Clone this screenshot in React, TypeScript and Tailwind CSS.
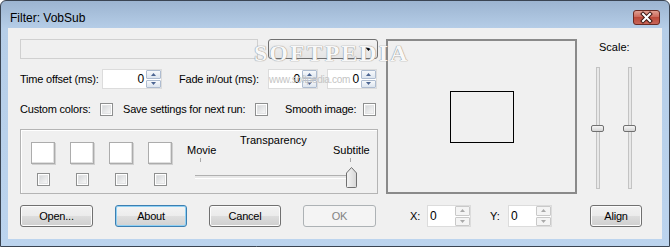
import React from "react"

const btnBase =
  "h-[22px] rounded-[3px] border flex items-center justify-center text-[11px] tracking-[-0.2px]"

function WinButton({ label, w, kind = "normal" }: { label: string; w: string; kind?: "normal" | "focused" | "disabled" }) {
  if (kind === "disabled") {
    return (
      <div className={`${btnBase} ${w} border-[#adb2b5] bg-[#f4f4f4] text-[#838383]`}>{label}</div>
    )
  }
  if (kind === "focused") {
    return (
      <div
        className={`${btnBase} ${w} border-[#3c7fb1] bg-[linear-gradient(#f4f4f4_0%,#ececec_50%,#dfdfdf_50%,#d2d2d2_100%)] shadow-[inset_0_0_0_1px_#8fd0f4] text-black`}
      >
        {label}
      </div>
    )
  }
  return (
    <div
      className={`${btnBase} ${w} border-[#707070] bg-[linear-gradient(#f2f2f2_0%,#ebebeb_50%,#dddddd_50%,#cfcfcf_100%)] shadow-[inset_0_0_0_1px_#fcfcfc] text-black`}
    >
      {label}
    </div>
  )
}

function CheckBox() {
  return (
    <div className="w-[13px] h-[13px] shrink-0 border border-[#8e8f8f] bg-white p-px">
      <div className="w-full h-full border border-[#e2e3e4] bg-[linear-gradient(135deg,#d6d8da,#f6f6f6)]" />
    </div>
  )
}

function SpinArrows({ disabled }: { disabled?: boolean }) {
  const arrow = disabled ? "#a9a9a9" : "#4c6592"
  const box = disabled
    ? "border-[#c9c9c9] bg-[#f4f4f4]"
    : "border-[#aebcd0] bg-[linear-gradient(#f7f9fb,#dde5ef)]"
  return (
    <div className="w-[15px] h-full flex flex-col gap-px shrink-0">
      <div className={`flex-1 border rounded-[1px] flex items-center justify-center ${box}`}>
        <svg width="5" height="3" viewBox="0 0 5 3">
          <path d="M0 3 L2.5 0 L5 3 Z" fill={arrow} />
        </svg>
      </div>
      <div className={`flex-1 border rounded-[1px] flex items-center justify-center ${box}`}>
        <svg width="5" height="3" viewBox="0 0 5 3">
          <path d="M0 0 L2.5 3 L5 0 Z" fill={arrow} />
        </svg>
      </div>
    </div>
  )
}

function SpinEdit({ w, right = true, disabled }: { w: string; right?: boolean; disabled?: boolean }) {
  return (
    <div className={`${w} h-[20px] shrink-0 border border-[#dcdcdc] bg-white flex items-stretch`}>
      <div
        className={`flex-1 flex items-center text-[12px] text-black ${right ? "justify-end pr-[2px]" : "justify-start pl-[2px]"}`}
      >
        0
      </div>
      <SpinArrows disabled={disabled} />
    </div>
  )
}

function VSlider() {
  return (
    <div className="relative w-[13px] h-[122px] flex justify-center">
      <div className="w-[4px] h-full border border-[#c3c3c3] bg-[#e8e8e8]" />
      <div className="absolute top-[58px] left-0 w-[13px] h-[7px] rounded-[2px] border border-[#707070] bg-[linear-gradient(#f6f6f6,#d4d4d4)]" />
    </div>
  )
}

export default function App() {
  return (
    <div className="w-[670px] h-[247px] bg-white font-['Liberation_Sans',Arial,sans-serif] text-[11px] text-black leading-[13px]">
      <div className="relative w-full h-full rounded-t-[6px] border border-[#3a4452] bg-[linear-gradient(#9cb4d0_0px,#b6cee8_28px,#bcd4ee_100%)] px-[7px] flex flex-col">
        {/* Title bar */}
        <div className="h-[27px] flex items-start justify-between pl-[2px] pr-[2px] shrink-0">
          <div className="mt-[10px] text-[12px] leading-[14px] text-black">Filter: VobSub</div>
          <svg width="27" height="15" viewBox="0 0 27 15" className="mt-[9px]">
            <defs>
              <linearGradient id="cb" x1="0" y1="0" x2="0" y2="1">
                <stop offset="0" stopColor="#e2a496" />
                <stop offset="0.45" stopColor="#cd6a5c" />
                <stop offset="0.5" stopColor="#bb4a3a" />
                <stop offset="1" stopColor="#c9675a" />
              </linearGradient>
            </defs>
            <rect x="0.5" y="0.5" width="26" height="14" rx="2.5" fill="url(#cb)" stroke="#6b2a22" />
            <path d="M10 4 L17 11 M17 4 L10 11" stroke="#3b1712" strokeWidth="4" strokeLinecap="square" />
            <path d="M10 4 L17 11 M17 4 L10 11" stroke="#ffffff" strokeWidth="2" strokeLinecap="square" />
          </svg>
        </div>

        {/* Client area */}
        <div className="h-[211px] bg-[#f0f0f0] pl-[12px] pt-[11px] flex flex-col shrink-0">
          <div className="flex h-[155px]">
            {/* Left column */}
            <div className="w-[358px] flex flex-col">
              <div className="flex h-[20px]">
                <div className="w-[238px] h-[20px] border border-[#d0d0d0] bg-[#f0f0f0]" />
                <div className="ml-[10px] w-[110px] h-[20px] rounded-[3px] border border-[#707070] bg-[linear-gradient(#f3f3f3,#e4e4e4)] flex items-center justify-end pr-[5px]">
                  <svg width="7" height="4" viewBox="0 0 7 4">
                    <path d="M0 0 L7 0 L3.5 4 Z" fill="#000" />
                  </svg>
                </div>
              </div>

              <div className="mt-[10px] flex h-[20px] items-center tracking-[-0.2px]">
                <div className="w-[82px]">Time offset (ms):</div>
                <SpinEdit w="w-[60px]" />
                <div className="ml-[17px] w-[89px]">Fade in/out (ms):</div>
                <SpinEdit w="w-[50px]" />
                <div className="ml-[9px]">
                  <SpinEdit w="w-[50px]" />
                </div>
              </div>

              <div className="mt-[14px] flex h-[13px] items-center tracking-[-0.2px]">
                <div className="w-[80px]">Custom colors:</div>
                <CheckBox />
                <div className="ml-[10px] w-[132px]">Save settings for next run:</div>
                <CheckBox />
                <div className="ml-[17px] w-[78px]">Smooth image:</div>
                <CheckBox />
              </div>

              {/* Group box */}
              <div className="mt-[13px] h-[65px] border border-[#b4b4b4] shadow-[inset_1px_1px_0_#ffffff] flex pl-[10px] pt-[12px]">
                {[0, 1, 2, 3].map((i) => (
                  <div key={i} className={`flex flex-col items-center w-[24px] ${i > 0 ? "ml-[15px]" : ""}`}>
                    <div className="w-[24px] h-[22px] bg-white border border-[#acacac] shadow-[inset_-1px_-1px_0_#e0e0e0,1px_1px_0_#d0d0d0]" />
                    <div className="mt-[9px]">
                      <CheckBox />
                    </div>
                  </div>
                ))}
                <div className="relative ml-[15px] w-[181px] h-full -mt-[12px]">
                  <div className="absolute left-[53px] top-[4px]">Transparency</div>
                  <div className="absolute left-0 top-[14px]">Movie</div>
                  <div className="absolute left-[146px] top-[14px]">Subtitle</div>
                  <div className="absolute left-[13px] top-[28px] w-px h-[4px] bg-[#a8a8a8]" />
                  <div className="absolute left-[163px] top-[28px] w-px h-[4px] bg-[#a8a8a8]" />
                  <div className="absolute left-[8px] top-[45px] w-[162px] h-[3px] border-t border-[#b0b0b0] bg-[#e8e8e8] shadow-[0_1px_0_#ffffff]" />
                  <svg width="11" height="21" viewBox="0 0 11 21" className="absolute left-[159px] top-[37px]">
                    <defs>
                      <linearGradient id="th" x1="0" y1="0" x2="1" y2="0">
                        <stop offset="0" stopColor="#f4f4f4" />
                        <stop offset="1" stopColor="#d6d6d6" />
                      </linearGradient>
                    </defs>
                    <path d="M0.5 6 L5.5 0.5 L10.5 6 L10.5 19.5 Q10.5 20.5 9.5 20.5 L1.5 20.5 Q0.5 20.5 0.5 19.5 Z" fill="url(#th)" stroke="#707070" />
                  </svg>
                </div>
              </div>
            </div>

            {/* Preview */}
            <div className="ml-[8px] w-[191px] h-[155px] border-2 border-[#8a8a8a] flex items-center justify-center">
              <div className="w-[64px] h-[52px] border-[1.5px] border-black ml-[1px] mt-[1px]" />
            </div>

            {/* Scale */}
            <div className="ml-[13px] w-[52px] flex flex-col">
              <div className="pt-[2px] pl-[9px]">Scale:</div>
              <div className="mt-[13px] flex pl-[1px] gap-[19px]">
                <VSlider />
                <VSlider />
              </div>
            </div>
          </div>

          {/* Bottom buttons */}
          <div className="mt-[11px] flex h-[22px] items-center">
            <WinButton label="Open..." w="w-[73px]" />
            <div className="ml-[22px]">
              <WinButton label="About" w="w-[72px]" kind="focused" />
            </div>
            <div className="ml-[22px]">
              <WinButton label="Cancel" w="w-[72px]" />
            </div>
            <div className="ml-[22px]">
              <WinButton label="OK" w="w-[73px]" kind="disabled" />
            </div>
            <div className="ml-[34px] w-[17px]">X:</div>
            <div className="h-[22px] flex">
              <SpinEdit w="w-[44px] !h-[22px]" right={false} disabled />
            </div>
            <div className="ml-[19px] w-[18px]">Y:</div>
            <div className="h-[22px] flex">
              <SpinEdit w="w-[44px] !h-[22px]" right={false} disabled />
            </div>
            <div className="ml-[38px]">
              <WinButton label="Align" w="w-[52px]" />
            </div>
          </div>
        </div>

        {/* Watermarks */}
        <div className="absolute left-[253px] top-[39px] text-[24px] leading-[26px] font-bold tracking-[2px] text-[#f8f8f8] [text-shadow:0_0_1px_#8c8c8c,0_0_1px_#8c8c8c] font-['Liberation_Serif',serif] pointer-events-none">
          SOFTPEDIA
        </div>
        <div className="absolute left-[268px] top-[73px] text-[10px] leading-[12px] text-[#c4c4c4] tracking-[-0.3px] pointer-events-none">
          www.softpedia.com
        </div>
      </div>
    </div>
  )
}
